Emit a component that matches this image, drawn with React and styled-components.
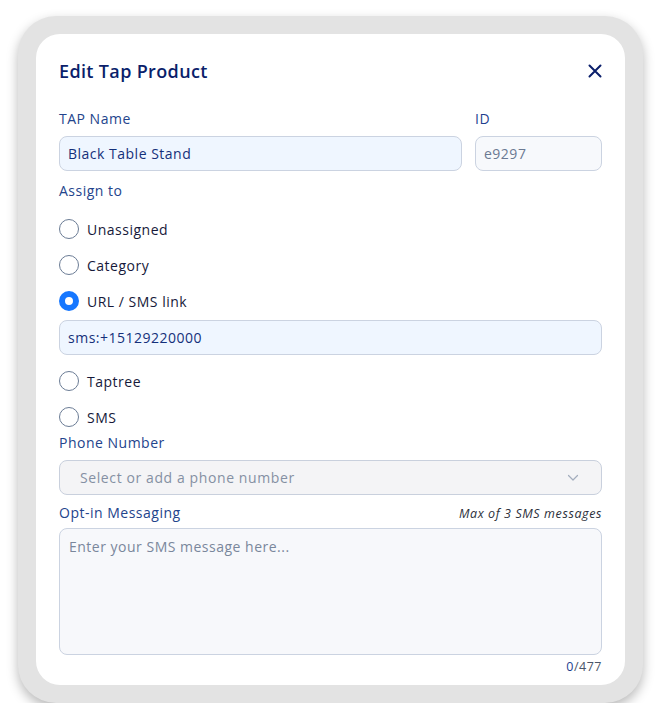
import styled, { createGlobalStyle } from 'styled-components';

const GlobalStyle = createGlobalStyle`
  html, body {
    margin: 0;
    padding: 0;
    background: #ffffff;
  }
  body {
    font-family: "Open Sans", "DejaVu Sans", sans-serif;
    letter-spacing: 0.5px;
  }
  * {
    box-sizing: border-box;
  }
`;

const Frame = styled.div`
  margin: 16px 0 0 18px;
  width: 625px;
  height: 687px;
  padding: 18px;
  background: #e3e3e3;
  border-radius: 38px;
  box-shadow: 0 5px 12px rgba(0, 0, 0, 0.28);
`;

const Card = styled.div`
  height: 100%;
  background: #ffffff;
  border-radius: 24px;
  padding: 26px 23px 0;
  display: flex;
  flex-direction: column;
`;

const Header = styled.div`
  display: flex;
  align-items: center;
  justify-content: space-between;
  height: 22px;
  margin-bottom: 27px;
`;

const Title = styled.h2`
  margin: 0;
  font-size: 18px;
  font-weight: 600;
  color: #0b1f6b;
  letter-spacing: 0.35px;
`;

const CloseButton = styled.button`
  border: 0;
  background: none;
  padding: 0;
  width: 16px;
  height: 16px;
  display: flex;
  align-items: center;
  justify-content: center;
  cursor: pointer;
  margin-right: -1px;
`;

const Row = styled.div`
  display: flex;
  gap: 13px;
`;

const Field = styled.div`
  display: flex;
  flex-direction: column;
  flex: ${(p) => p.$flex || 1};
`;

const Label = styled.div`
  font-size: 14px;
  line-height: 20px;
  color: ${(p) => p.$color || '#23448c'};
  margin: ${(p) => p.$margin || '0 0 7px'};
`;

const Input = styled.div`
  height: 35px;
  border: 1px solid #cbd3e1;
  border-radius: 8px;
  background: ${(p) => (p.$muted ? '#f7f9fc' : '#eff6ff')};
  color: ${(p) => (p.$muted ? '#6b7a93' : '#14307a')};
  font-size: 14px;
  font-weight: ${(p) => (p.$muted ? 400 : 500)};
  display: flex;
  align-items: center;
  padding: 0 8px;
  margin: ${(p) => p.$margin || '0'};
`;

const RadioList = styled.div`
  display: flex;
  flex-direction: column;
`;

const RadioRow = styled.label`
  display: flex;
  align-items: center;
  gap: 8px;
  height: 20px;
  margin-bottom: ${(p) => (p.$checked ? '9px' : '16px')};
  font-size: 14px;
  color: #16193a;
  cursor: pointer;
`;

const RadioDot = styled.span`
  width: 20px;
  height: 20px;
  border-radius: 50%;
  flex-shrink: 0;
  border: ${(p) => (p.$checked ? '6px solid #1677ff' : '1.5px solid #6b7c95')};
  background: #ffffff;
`;

const Select = styled.div`
  height: 35px;
  border: 1px solid #c9d0dd;
  border-radius: 8px;
  background: #f4f4f6;
  display: flex;
  align-items: center;
  justify-content: space-between;
  padding: 0 22px 0 20px;
  font-size: 14px;
  letter-spacing: 0.6px;
  color: #8590a3;
  margin-bottom: 8px;
`;

const LabelRow = styled.div`
  display: flex;
  align-items: center;
  justify-content: space-between;
  margin-bottom: 5px;
`;

const Hint = styled.span`
  font-size: 12.5px;
  font-style: italic;
  letter-spacing: 0.6px;
  color: #2b2f3a;
`;

const TextArea = styled.div`
  height: 127px;
  border: 1px solid #cbd3e1;
  border-radius: 8px;
  background: #f7f8fb;
  padding: 8px 9px;
  font-size: 14px;
  color: #7a879c;
`;

const Counter = styled.div`
  margin-top: 4px;
  text-align: right;
  font-size: 12.5px;
  line-height: 16px;
  color: #4a5568;

  b {
    font-weight: 400;
    color: #1f3f8f;
  }
`;

const options = [
  { label: 'Unassigned' },
  { label: 'Category' },
  { label: 'URL / SMS link', checked: true },
  { label: 'Taptree' },
  { label: 'SMS' },
];

export default function App() {
  return (
    <>
      <GlobalStyle />
      <Frame>
        <Card>
          <Header>
            <Title>Edit Tap Product</Title>
            <CloseButton aria-label="Close">
              <svg width="14" height="14" viewBox="0 0 14 14" fill="none">
                <path d="M1.5 1.5L12.5 12.5M12.5 1.5L1.5 12.5" stroke="#0b1f6b" strokeWidth="2" strokeLinecap="round" />
              </svg>
            </CloseButton>
          </Header>

          <Row>
            <Field $flex={403}>
              <Label>TAP Name</Label>
              <Input>Black Table Stand</Input>
            </Field>
            <Field $flex={127}>
              <Label $color="#1f3f8f">ID</Label>
              <Input $muted>e9297</Input>
            </Field>
          </Row>

          <Label $margin="10px 0 18px">Assign to</Label>

          <RadioList>
            {options.map((o) => (
              <div key={o.label}>
                <RadioRow $checked={o.checked}>
                  <RadioDot $checked={o.checked} />
                  {o.label}
                </RadioRow>
                {o.checked && <Input $margin="0 0 16px">sms:+15129220000</Input>}
              </div>
            ))}
          </RadioList>

          <Label $margin="-10px 0 7px">Phone Number</Label>
          <Select>
            Select or add a phone number
            <svg width="12" height="8" viewBox="0 0 12 8" fill="none">
              <path d="M1.5 1.5L6 6L10.5 1.5" stroke="#a3adbd" strokeWidth="1.2" strokeLinecap="round" strokeLinejoin="round" />
            </svg>
          </Select>

          <LabelRow>
            <Label $margin="0">Opt-in Messaging</Label>
            <Hint>Max of 3 SMS messages</Hint>
          </LabelRow>
          <TextArea>Enter your SMS message here...</TextArea>
          <Counter>
            <b>0</b>/477
          </Counter>
        </Card>
      </Frame>
    </>
  );
}
